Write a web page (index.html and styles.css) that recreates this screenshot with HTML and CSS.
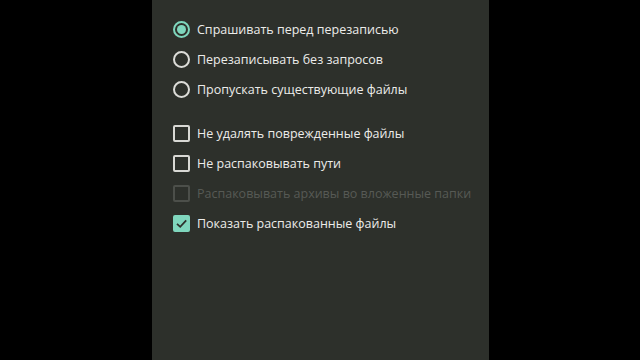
FILE: index.html
```html
<!DOCTYPE html>
<html lang="ru">
<head>
    <meta charset="UTF-8">
    <meta name="viewport" content="width=device-width, initial-scale=1.0">
    <title>Параметры распаковки</title>
    <link rel="stylesheet" href="styles.css">
</head>
<body>
    <div class="panel">
        <div class="group">
            <div class="option">
                <span class="radio checked"></span>
                <span class="label">Спрашивать перед перезаписью</span>
            </div>
            <div class="option">
                <span class="radio"></span>
                <span class="label">Перезаписывать без запросов</span>
            </div>
            <div class="option">
                <span class="radio"></span>
                <span class="label">Пропускать существующие файлы</span>
            </div>
        </div>
        <div class="group">
            <div class="option">
                <span class="box"></span>
                <span class="label">Не удалять поврежденные файлы</span>
            </div>
            <div class="option">
                <span class="box"></span>
                <span class="label">Не распаковывать пути</span>
            </div>
            <div class="option disabled">
                <span class="box"></span>
                <span class="label">Распаковывать архивы во вложенные папки</span>
            </div>
            <div class="option">
                <span class="box checked">
                    <svg width="13" height="13" viewBox="0 0 13 13"><path d="M2 6.8 L5.2 9.8 L11.2 3.4" fill="none" stroke="#2d302b" stroke-width="1.8"/></svg>
                </span>
                <span class="label">Показать распакованные файлы</span>
            </div>
        </div>
    </div>
</body>
</html>
```

FILE: styles.css
```css
body {
    margin: 0;
    background: #000;
    font-family: "Open Sans", "DejaVu Sans", sans-serif;
    height: 360px;
    overflow: hidden;
}
.panel {
    margin-left: 152px;
    width: 337px;
    height: 360px;
    background: #2d302b;
    padding: 14px 0 0 21px;
    box-sizing: border-box;
    display: flex;
    flex-direction: column;
    gap: 14px;
}
.option {
    display: flex;
    align-items: center;
    height: 30px;
    gap: 7px;
    color: #ececea;
    font-size: 12.5px;
    font-weight: 500;
}
.radio {
    width: 13px;
    height: 13px;
    border: 2px solid #dcdcd8;
    border-radius: 50%;
    display: flex;
    align-items: center;
    justify-content: center;
}
.radio.checked {
    border-color: #7fd6bd;
}
.radio.checked::after {
    content: "";
    width: 9px;
    height: 9px;
    border-radius: 50%;
    background: #7fd6bd;
}
.box {
    width: 13px;
    height: 13px;
    border: 2px solid #d8d8d4;
    border-radius: 2px;
    display: flex;
    align-items: center;
    justify-content: center;
}
.box.checked {
    background: #7fd6bd;
    border-color: #7fd6bd;
}
.disabled {
    color: #575a55;
}
.disabled .box {
    border-color: #4c4f4a;
}
```
